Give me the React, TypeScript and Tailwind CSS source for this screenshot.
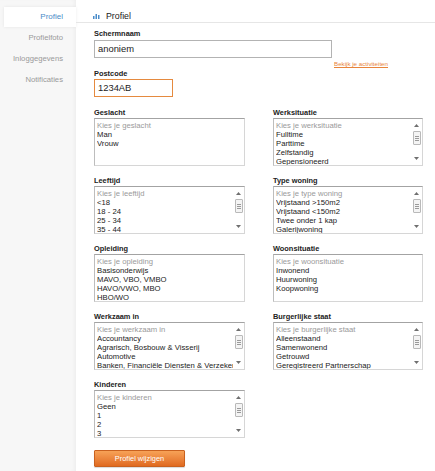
import React from "react";

type Field = { label: string; placeholder: string; options: string[] };

const fields: Field[] = [
  { label: "Geslacht", placeholder: "Kies je geslacht", options: ["Man", "Vrouw"] },
  { label: "Werksituatie", placeholder: "Kies je werksituatie", options: ["Fulltime", "Parttime", "Zelfstandig", "Gepensioneerd", "Student"] },
  { label: "Leeftijd", placeholder: "Kies je leeftijd", options: ["<18", "18 - 24", "25 - 34", "35 - 44", "45 - 54"] },
  { label: "Type woning", placeholder: "Kies je type woning", options: ["Vrijstaand >150m2", "Vrijstaand <150m2", "Twee onder 1 kap", "Galerijwoning", "Tussenwoning"] },
  { label: "Opleiding", placeholder: "Kies je opleiding", options: ["Basisonderwijs", "MAVO, VBO, VMBO", "HAVO/VWO, MBO", "HBO/WO"] },
  { label: "Woonsituatie", placeholder: "Kies je woonsituatie", options: ["Inwonend", "Huurwoning", "Koopwoning"] },
  { label: "Werkzaam in", placeholder: "Kies je werkzaam in", options: ["Accountancy", "Agrarisch, Bosbouw & Visserij", "Automotive", "Banken, Financiële Diensten & Verzekeringen", "Bouw"] },
  { label: "Burgerlijke staat", placeholder: "Kies je burgerlijke staat", options: ["Alleenstaand", "Samenwonend", "Getrouwd", "Geregistreerd Partnerschap", "Gescheiden"] },
  { label: "Kinderen", placeholder: "Kies je kinderen", options: ["Geen", "1", "2", "3", "4"] },
];

const Scrollbar = () => (
  <div className="flex flex-col items-center w-[11px] shrink-0 bg-white">
    <svg width="5" height="3" viewBox="0 0 5 3" className="mt-[5px]">
      <path d="M0 3 L2.5 0 L5 3 Z" fill="#6f6f6f" />
    </svg>
    <div className="mt-[4px] w-[8px] h-[14px] border border-[#b9b9b9] rounded-[1px] bg-[#f4f4f4] flex flex-col items-center justify-center gap-[1px]">
      <div className="w-[4px] h-px bg-[#9a9a9a]" />
      <div className="w-[4px] h-px bg-[#9a9a9a]" />
      <div className="w-[4px] h-px bg-[#9a9a9a]" />
    </div>
    <svg width="5" height="3" viewBox="0 0 5 3" className="mt-auto mb-[5px]">
      <path d="M0 0 L2.5 3 L5 0 Z" fill="#6f6f6f" />
    </svg>
  </div>
);

const ListBox = ({ field }: { field: Field }) => {
  const scroll = field.options.length > 4;
  return (
    <div>
      <div className="h-[10px] text-[7.4px] leading-[10px] font-bold text-[#222]">{field.label}</div>
      <div className="flex h-[48px] border border-[#d6d6d6] border-t-[#a3a3a3] border-l-[#bdbdbd] bg-white overflow-hidden">
        <div className="flex-1 min-w-0 pt-[1.5px] pl-[2px] text-[7.7px] leading-[9px] text-[#222]">
          <div className="text-[#9a9a9a] whitespace-nowrap">{field.placeholder}</div>
          {field.options.slice(0, 4).map((o) => (
            <div key={o} className="whitespace-nowrap overflow-hidden text-[#222]">{o}</div>
          ))}
        </div>
        {scroll && <Scrollbar />}
      </div>
    </div>
  );
};

const navItems = ["Profiel", "Profielfoto", "Inloggegevens", "Notificaties"];

export default function App() {
  return (
    <div className="flex min-h-[471px] w-[435px] bg-white font-['Liberation_Sans',Arial,sans-serif]">
      {/* Sidebar */}
      <div className="w-[76px] shrink-0 bg-[#f7f7f7] shadow-[inset_-3px_0_4px_-2px_rgba(0,0,0,0.05)] pt-[7px]">
        {navItems.map((item, i) => (
          <div
            key={item}
            className={
              i === 0
                ? "ml-[4px] h-[20px] pr-[13px] flex items-center justify-end bg-white text-[#4a8cc9] text-[8px] shadow-[0_0_3px_rgba(0,0,0,0.08)]"
                : "ml-[4px] h-[21px] pr-[13px] flex items-center justify-end text-[#9a9a9a] text-[7.7px]"
            }
          >
            {item}
          </div>
        ))}
      </div>

      {/* Main */}
      <div className="flex-1 min-w-0">
        <div className="h-[23px] pt-[10px] pl-[17px] border-b border-[#e6e6e6] flex items-start gap-[6px]">
          <svg width="7" height="6" viewBox="0 0 7 6" className="mt-[3px]">
            <rect x="0" y="3" width="1.5" height="3" fill="#4a8cc9" />
            <rect x="2.5" y="1" width="1.5" height="5" fill="#4a8cc9" />
            <rect x="5" y="2" width="1.5" height="4" fill="#4a8cc9" />
          </svg>
          <span className="text-[8.8px] leading-[12px] text-[#222]">Profiel</span>
        </div>

        <div className="pl-[18px]">
          <div className="mt-[6px] h-[10px] text-[7.4px] leading-[10px] font-bold text-[#222]">Schermnaam</div>
          <div className="mt-px flex items-start">
            <div className="w-[238px] h-[18px] border-[1.5px] border-[#b3b3b3] px-[3px] flex items-center text-[9.4px] text-[#222]">
              anoniem
            </div>
            <a href="#" className="ml-[2px] mt-[20px] h-[7px] leading-[7px] text-[6.2px] text-[#e8843a] underline">
              Bekijk je activiteiten
            </a>
          </div>

          <div className="mt-[2px] h-[10px] text-[7.4px] leading-[10px] font-bold text-[#222]">Postcode</div>
          <div className="w-[79px] h-[18px] border-[1.5px] border-[#e58a3f] px-[3px] flex items-center text-[9.4px] text-[#222]">
            1234AB
          </div>

          <div className="mt-[11px] grid grid-cols-[151px_150px] gap-x-[28px] gap-y-[10px]">
            {fields.map((f) => (
              <ListBox key={f.label} field={f} />
            ))}
          </div>

          <button className="mt-[12px] w-[91px] h-[17px] rounded-[1px] border border-[#c9611f] bg-gradient-to-b from-[#f7a257] to-[#e06a1f] text-white text-[7.4px] shadow-[0_1px_1px_rgba(0,0,0,0.15)]">
            Profiel wijzigen
          </button>
        </div>
      </div>
    </div>
  );
}
